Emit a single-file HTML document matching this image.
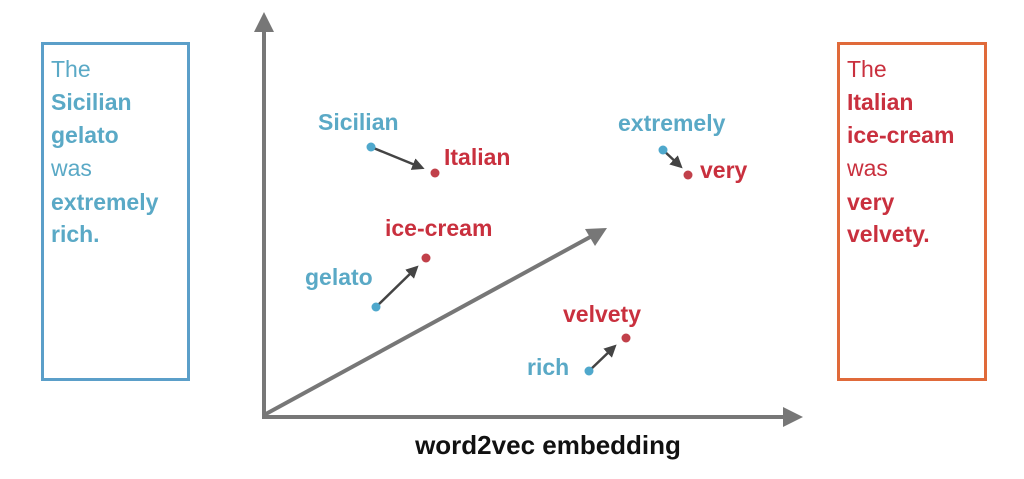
<!DOCTYPE html>
<html><head><meta charset="utf-8"><style>
html,body{margin:0;padding:0;background:#fff;width:1024px;height:479px;overflow:hidden}
svg text{font-family:"Liberation Sans",sans-serif}
.b{fill:#5aa9c6}.r{fill:#c9303e}
.lab{font-size:23px;font-weight:bold}
</style></head><body>
<svg width="1024" height="479" viewBox="0 0 1024 479">
<defs>
<marker id="ah" markerWidth="5" markerHeight="5" refX="3" refY="2.5" orient="auto" markerUnits="strokeWidth"><path d="M0,0 L5,2.5 L0,5 z" fill="#444"/></marker>
</defs>
<rect x="42.5" y="43.5" width="146" height="336" fill="none" stroke="#5b9fc9" stroke-width="3"/>
<rect x="838.5" y="43.5" width="147" height="336" fill="none" stroke="#e06a3a" stroke-width="3"/>
<g font-size="23">
<text x="51" y="77" class="b">The</text>
<text x="51" y="110" class="b" font-weight="bold">Sicilian</text>
<text x="51" y="143" class="b" font-weight="bold">gelato</text>
<text x="51" y="176" class="b">was</text>
<text x="51" y="210" class="b" font-weight="bold">extremely</text>
<text x="51" y="242" class="b" font-weight="bold">rich.</text>
<text x="847" y="77" class="r">The</text>
<text x="847" y="110" class="r" font-weight="bold">Italian</text>
<text x="847" y="143" class="r" font-weight="bold">ice-cream</text>
<text x="847" y="176" class="r">was</text>
<text x="847" y="210" class="r" font-weight="bold">very</text>
<text x="847" y="242" class="r" font-weight="bold">velvety.</text>
</g>
<g stroke="#777" stroke-width="4" fill="#777">
<line x1="264" y1="417" x2="264" y2="30"/>
<polygon points="264,12 254,32 274,32" stroke="none"/>
<line x1="262" y1="417" x2="785" y2="417"/>
<polygon points="803,417 783,407 783,427" stroke="none"/>
<line x1="264" y1="415" x2="592" y2="236"/>
<polygon points="607,228 585,229 595,246" stroke="none"/>
</g>
<g stroke="#444" stroke-width="2.5" marker-end="url(#ah)">
<line x1="371" y1="147" x2="420" y2="167"/>
<line x1="376" y1="307" x2="415" y2="269"/>
<line x1="663" y1="150" x2="679" y2="165"/>
<line x1="589" y1="371" x2="613" y2="348"/>
</g>
<g>
<circle cx="371" cy="147" r="4.5" fill="#4fa8cc"/><circle cx="435" cy="173" r="4.5" fill="#c1404a"/>
<circle cx="376" cy="307" r="4.5" fill="#4fa8cc"/><circle cx="426" cy="258" r="4.5" fill="#c1404a"/>
<circle cx="663" cy="150" r="4.5" fill="#4fa8cc"/><circle cx="688" cy="175" r="4.5" fill="#c1404a"/>
<circle cx="589" cy="371" r="4.5" fill="#4fa8cc"/><circle cx="626" cy="338" r="4.5" fill="#c1404a"/>
</g>
<text x="318" y="130" class="b lab">Sicilian</text>
<text x="444" y="165" class="r lab">Italian</text>
<text x="618" y="131" class="b lab">extremely</text>
<text x="700" y="178" class="r lab">very</text>
<text x="385" y="236" class="r lab">ice-cream</text>
<text x="305" y="285" class="b lab">gelato</text>
<text x="563" y="322" class="r lab">velvety</text>
<text x="527" y="375" class="b lab">rich</text>
<text x="548" y="454" text-anchor="middle" font-size="26" font-weight="bold" fill="#111">word2vec embedding</text>
</svg>
</body></html>
